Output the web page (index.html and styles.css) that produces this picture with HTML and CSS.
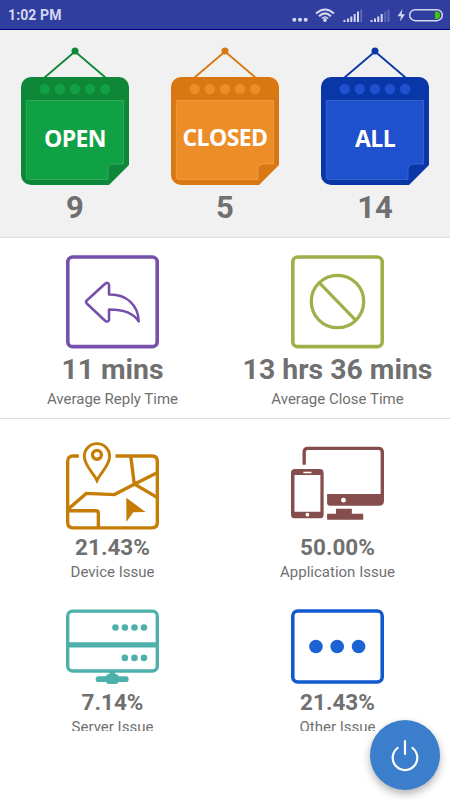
FILE: index.html
```html
<!DOCTYPE html>
<html lang="en">
<head>
  <meta charset="UTF-8" />
  <meta name="viewport" content="width=device-width, initial-scale=1.0"/>
  <title>Ticket Dashboard</title>
  <link rel="stylesheet" href="styles.css">
</head>
<body>
  <svg class="defs" width="0" height="0">
    <symbol id="board" viewBox="0 0 108 138">
      <path class="string" d="M23 31L54 4.500L85 31"/>
      <circle class="dark" cx="54" cy="4" r="3.500"/>
      <path class="dark" d="M10 30H98A10 10 0 0 1 108 40V118L88 138H10A10 10 0 0 1 0 128V40A10 10 0 0 1 10 30Z"/>
      <g class="light">
        <circle cx="23.700" cy="42" r="5.200"/>
        <circle cx="38.800" cy="42" r="5.200"/>
        <circle cx="54" cy="42" r="5.200"/>
        <circle cx="69" cy="42" r="5.200"/>
        <circle cx="84.200" cy="42" r="5.200"/>
      </g>
      <path class="light edge" d="M5.300 53.500H102.500V117H93Q87 117 87 123V132.500H8Q5.300 132.500 5.300 130Z"/>
    </symbol>
  </svg>

  <header class="status-bar">
    <span class="clock">1:02 PM</span>
    <svg class="status-icons" width="154" height="20" viewBox="0 0 154 20">
      <g fill="#d4d7ee">
        <circle cx="4.300" cy="14.700" r="2"/>
        <circle cx="10" cy="14.700" r="2"/>
        <circle cx="15.700" cy="14.700" r="2"/>
        <circle cx="35" cy="15" r="1.900"/>
      </g>
      <g fill="none" stroke="#d4d7ee" stroke-width="2">
        <path d="M26 8.500Q35 .5 44 8.500"/>
        <path d="M29 11.300Q35 5.500 41 11.300"/>
        <path d="M31.700 13.500Q35 10.500 38.300 13.500" stroke-width="1.500"/>
      </g>
      <g fill="#d4d7ee">
        <path d="M53.500 15h2v2h-2zM57 13.500h2V17h-2zM60.300 11.500h2V17h-2zM63.700 9h2v8h-2zM67 6.500h2V17h-2z"/>
        <path d="M80.500 15h2v2h-2zM84 13.500h2V17h-2zM87.300 11.500h2V17h-2zM90.700 9h2v8h-2z"/>
        <path d="M112.500 4L107.500 11.200H111L110 16.500L115 9.300H111.600Z"/>
      </g>
      <path d="M70.300 4.500h1.800V17h-1.800zM94.300 6.500h2V17h-2zM97.500 4.500h2V17h-2z" fill="#5f69b5"/>
      <rect x="119.700" y="4.700" width="32.600" height="11" rx="5.500" fill="none" stroke="#d4d7ee" stroke-width="1.500"/>
      <path d="M145 6.500h1.500a3.500 3.700 0 0 1 0 7.500H145z" fill="#43c60a"/>
    </svg>
  </header>

  <section class="tickets">
    <div class="ticket open">
      <svg width="108" height="138" viewBox="0 0 108 138">
        <use href="#board"/>
        <text x="54" y="99.500">OPEN</text>
      </svg>
      <span class="count">9</span>
    </div>
    <div class="ticket closed">
      <svg width="108" height="138" viewBox="0 0 108 138">
        <use href="#board"/>
        <text x="54" y="99">CLOSED</text>
      </svg>
      <span class="count">5</span>
    </div>
    <div class="ticket all">
      <svg width="108" height="138" viewBox="0 0 108 138">
        <use href="#board"/>
        <text x="54" y="99.500">ALL</text>
      </svg>
      <span class="count">14</span>
    </div>
  </section>

  <section class="times">
    <div class="time">
      <svg width="93" height="94" viewBox="0 0 94 94" fill="none" stroke="#7650ab" stroke-width="3.700">
        <rect x="1.800" y="1.500" width="90.400" height="90.600" rx="5"/>
        <path d="M43.500 39.500V29.500Q42.500 26.500 39.500 28.500L21 45.500Q19.500 47 21 48.500L39.500 66Q42.500 68 43.500 65V54.500C57 54.500 68 57.500 73.500 66.500C73 50 61 39 43.500 39.500Z" stroke-width="2.600" stroke-linejoin="round"/>
      </svg>
      <span class="value">11 mins</span>
      <span class="label">Average Reply Time</span>
    </div>
    <div class="time">
      <svg width="93" height="94" viewBox="0 0 94 94" fill="none" stroke="#a0af49" stroke-width="3.700">
        <rect x="1.800" y="1.500" width="90.400" height="90.600" rx="5"/>
        <circle cx="47" cy="46.500" r="26.500" stroke-width="3.300"/>
        <path d="M28.500 27.500L65.500 65.500" stroke-width="3.300"/>
      </svg>
      <span class="value">13 hrs 36 mins</span>
      <span class="label">Average Close Time</span>
    </div>
  </section>

  <section class="issues">
    <div class="issue">
      <svg width="93" height="90" viewBox="0 0 94 90" fill="none" stroke="#c57d05" stroke-width="3.400">
        <path d="M13 14.700H7Q1.700 14.700 1.700 20V82Q1.700 87.300 7 87.300H87Q92.300 87.300 92.300 82V20Q92.300 14.700 87 14.700H50"/>
        <path d="M31.300 39.500C28 32 18.500 24.500 18.500 15A12.800 12.800 0 0 1 44.100 15C44.100 24.500 34.600 32 31.300 39.500Z" stroke-width="2.900"/>
        <circle cx="31.300" cy="13.500" r="4.500"/>
        <path d="M2 68.500L20.500 52.500L49 53.700L69.500 43L92 31.500M65.500 15.500L69 43L92 56.500M2 70H30Q32.700 70 32.700 72.500V87"/>
        <path d="M61 57L80.500 71.300L68 71.500L61 81.500Z" fill="#c57d05" stroke="none"/>
      </svg>
      <span class="percent">21.43%</span>
      <span class="label">Device Issue</span>
    </div>
    <div class="issue">
      <svg width="93" height="90" viewBox="0 0 94 90">
        <path d="M13.300 23.500V11Q13.300 7 17 7H88.500Q92.300 7 92.300 11V57" fill="none" stroke="#854e4c" stroke-width="3.400"/>
        <path d="M36.500 53H94V60Q94 65 89 65H39.500Q36.500 65 36.500 62Z" fill="#854e4c"/>
        <path d="M45.500 68H61.500V73H73V79H36.500V73H45.500Z" fill="#854e4c"/>
        <circle cx="53" cy="59.300" r="2.400" fill="#fff"/>
        <rect x="0" y="27.700" width="33" height="50" rx="4" fill="#854e4c"/>
        <path d="M3.500 34H29.700V71H3.500ZM12.500 30.600H20.700V32.200H12.500Z" fill="#fff"/>
        <circle cx="16.600" cy="74" r="1.900" fill="#fff"/>
      </svg>
      <span class="percent">50.00%</span>
      <span class="label">Application Issue</span>
    </div>
    <div class="issue">
      <svg width="93" height="78" viewBox="0 0 94 78">
        <rect x="1.700" y="2.700" width="90.600" height="60.600" rx="5" fill="none" stroke="#4db0aa" stroke-width="3.400"/>
        <path d="M2 34.300H92V39.600H2Z" fill="#4db0aa"/>
        <g fill="#4db0aa">
          <circle cx="50" cy="19.300" r="3.300"/>
          <circle cx="59.500" cy="19.300" r="3.300"/>
          <circle cx="69.200" cy="19.300" r="3.300"/>
          <circle cx="78.800" cy="19.300" r="3.300"/>
          <circle cx="59.500" cy="50" r="3.300"/>
          <circle cx="69.200" cy="50" r="3.300"/>
          <circle cx="78.800" cy="50" r="3.300"/>
          <path d="M44 64H49.500V67H44Z"/>
          <rect x="30" y="68.500" width="33.300" height="6" rx="3"/>
          <rect x="40.500" y="66.300" width="12.500" height="10" rx="3"/>
        </g>
      </svg>
      <span class="percent">7.14%</span>
      <span class="label">Server Issue</span>
    </div>
    <div class="issue">
      <svg width="93" height="78" viewBox="0 0 94 78" fill="#1b62d2">
        <rect x="1.800" y="2.700" width="90.400" height="71.600" rx="5" fill="none" stroke="#1059cf" stroke-width="3.600"/>
        <circle cx="25.200" cy="38.500" r="6.900"/>
        <circle cx="46.700" cy="38.500" r="6.900"/>
        <circle cx="68.300" cy="38.500" r="6.900"/>
      </svg>
      <span class="percent">21.43%</span>
      <span class="label">Other Issue</span>
    </div>
  </section>

  <button class="power" aria-label="Log out">
    <svg width="30" height="34" viewBox="0 0 30 34" fill="none" stroke="#fff" stroke-width="2.200" stroke-linecap="round">
      <path d="M15 3V16M7.500 10A12.300 12.300 0 1 0 22.500 10"/>
    </svg>
  </button>
</body>
</html>
```

FILE: styles.css
```css
* {
  margin: 0;
  padding: 0;
  box-sizing: border-box;
}

body {
  height: 800px;
  background: #fff;
  color: #707070;
  font-family: Roboto, sans-serif;
  overflow: hidden;
}

svg {
  display: block;
  flex-shrink: 0;
}

.defs {
  position: absolute;
}

.status-bar {
  height: 30px;
  padding: 1px 6px 0 8px;
  display: flex;
  align-items: center;
  justify-content: space-between;
  background: #303f9f;
  border-bottom: 1px solid #000080;
}

.clock {
  color: #d4d7ee;
  font-size: 14px;
  font-weight: 700;
  letter-spacing: 0.1px;
}

/* open / closed / all */
.tickets {
  height: 208px;
  padding-top: 17px;
  display: grid;
  grid-template-columns: repeat(3, 1fr);
  background: #f1f1f1;
  border-bottom: 1px solid #dcdcdc;
}

.ticket {
  display: flex;
  flex-direction: column;
  align-items: center;
}

.ticket text {
  fill: #fff;
  font-family: "Open Sans", sans-serif;
  font-size: 23px;
  font-weight: 700;
  letter-spacing: -0.6px;
  text-anchor: middle;
}

.open {
  --dark: #0e8838;
  --light: #10a144;
  --edge: #4fbd75;
}

.closed {
  --dark: #d97812;
  --light: #ed8d28;
  --edge: #f5ae63;
}

.all {
  --dark: #0a37a8;
  --light: #1f50cd;
  --edge: #587de0;
}

.dark {
  fill: var(--dark);
}

.light {
  fill: var(--light);
}

.edge {
  stroke: var(--edge);
  stroke-width: 0.5;
}

.string {
  fill: none;
  stroke: var(--dark);
  stroke-width: 1.8;
}

.count {
  margin-top: 5px;
  font-size: 31px;
  font-weight: 700;
  line-height: 36px;
}

/* average times */
.times {
  height: 181px;
  padding-top: 17px;
  display: grid;
  grid-template-columns: 1fr 1fr;
  border-bottom: 1px solid #dcdcdc;
}

.time,
.issue {
  display: flex;
  flex-direction: column;
  align-items: center;
}

.value {
  margin-top: 4px;
  font-size: 28.4px;
  font-weight: 700;
  line-height: 34px;
}

.label {
  font-size: 15px;
  line-height: 18px;
}

.time .label {
  margin-top: 3px;
}

/* issue breakdown, cut off where the list ends */
.issues {
  height: 312px;
  padding-top: 22px;
  display: grid;
  grid-template-columns: 1fr 1fr;
  grid-template-rows: 167px 123px;
  overflow: hidden;
}

.percent {
  margin-top: 3px;
  font-size: 22.5px;
  font-weight: 700;
  line-height: 26px;
}

.issue .label {
  margin-top: 3px;
}

.power {
  position: absolute;
  right: 10px;
  bottom: 10px;
  width: 70px;
  height: 70px;
  display: flex;
  align-items: center;
  justify-content: center;
  background: #3b7ecb;
  border: none;
  border-radius: 50%;
  box-shadow: 0 4px 8px rgba(0, 0, 0, 0.3);
  cursor: pointer;
}
```
